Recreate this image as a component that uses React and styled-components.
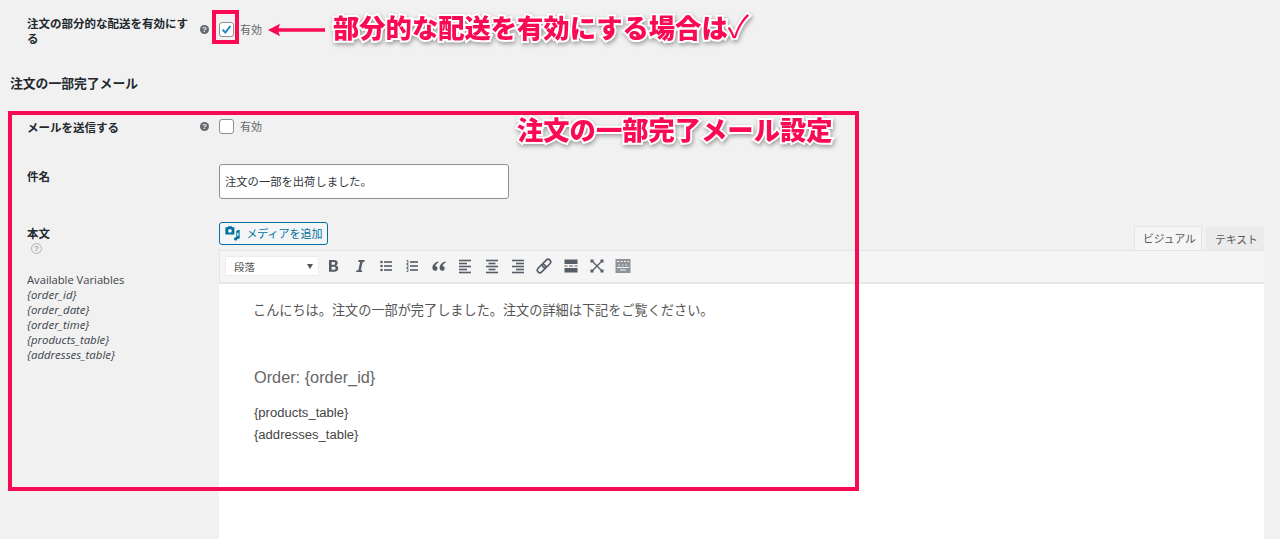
import React from "react";
import styled, { createGlobalStyle } from "styled-components";

const Global = createGlobalStyle`
  html, body { margin: 0; padding: 0; background: #f1f1f1; }
  body { font-family: "Noto Sans CJK JP", "Noto Sans", sans-serif; color: #23282d; }
`;
const Page = styled.div`
  position: relative; width: 1280px; height: 539px; overflow: hidden;
  background: #f1f1f1; box-sizing: border-box; padding: 16px 16px 0 10px;
`;
const Row = styled.div`
  display: grid; grid-template-columns: ${p => p.$cols || "173px 19px 1fr"}; padding-left: 17px;
  margin-top: ${p => p.$top || 0}px; align-items: start;
`;
const Label = styled.div`
  font-size: 11.5px; line-height: 14.5px; font-weight: 700; color: #23282d;
  padding-right: 5px; margin-top: ${p => p.$top || 0}px;
`;
const Heading = styled.h2`
  margin: 29px 0 0; font-size: 12.8px; line-height: 18px; font-weight: 700; color: #23282d;
`;
const HelpDot = styled.span`
  display: block; width: 9px; height: 9px; border-radius: 50%; background: #646970; color: #f1f1f1;
  font: 700 8px/9px "Liberation Sans", sans-serif; text-align: center; margin-top: ${p => p.$top || 0}px;
`;
const HelpRing = styled.span`
  display: block; width: 9px; height: 9px; border-radius: 50%; border: 1.5px solid #b0b4b8; color: #a0a5aa;
  font: 700 8px/9px "Liberation Sans", sans-serif; text-align: center; margin: 3px 0 0 4px;
`;
const Check = styled.label`
  display: flex; align-items: center; gap: 6px; font-size: 11px; line-height: 16px; color: #646970;
  margin-top: ${p => p.$top || 0}px;
`;
const Box = styled.span`
  display: flex; align-items: center; justify-content: center; width: 13px; height: 13px;
  border: 1px solid #8c8f94; border-radius: 3px; background: #fff;
`;
const TextInput = styled.div`
  width: 288px; height: 32px; padding-bottom: 1px; background: #fff;
  border: 1px solid #8c8f94; border-radius: 3px; display: flex; align-items: center;
  font-size: 11.3px; color: #32373c; text-indent: 5px;
`;
const SideNote = styled.div`
  font-family: "Open Sans", "Noto Sans", sans-serif; font-size: 11.2px; line-height: 15px; color: #3c434a; margin-top: 18px;
  font-weight: 500;
`;
const Var = styled.div`
  font-style: italic; font-size: 11.4px;
`;
const Editor = styled.div`
  display: flex; flex-direction: column; min-width: 0;
`;
const EditorHead = styled.div`
  display: flex; justify-content: space-between; align-items: flex-end; height: 27px;
`;
const MediaButton = styled.div`
  display: flex; align-items: center; justify-content: center; gap: 5px; width: 107px; height: 21px; margin-bottom: 5px;
  border: 1px solid #0071a1; border-radius: 3px; background: #f3f5f6; color: #0071a1;
  font-size: 11px; line-height: 21px;
`;
const Tabs = styled.div`
  display: flex; gap: 4px; align-items: flex-end;
`;
const Tab = styled.div`
  height: ${p => p.$on ? 24 : 23}px; box-sizing: border-box; padding: 0 8px; font-size: 10.8px; line-height: 23px;
  color: #555; background: ${p => p.$on ? "#f5f5f5" : "#ebebeb"}; border: 1px solid ${p => p.$on ? "#e2e4e7" : "#ebebeb"};
  border-bottom: none; width: ${p => p.$w}px; text-align: center; white-space: nowrap;
`;
const Toolbar = styled.div`
  display: flex; align-items: center; height: 34px; padding-left: 5px; box-sizing: border-box;
  background: #f5f5f5; border: 1px solid #e2e4e7; border-right: none; border-bottom: 2px solid #e6e6e6;
`;
const Select = styled.div`
  display: flex; align-items: center; justify-content: space-between; box-sizing: border-box;
  width: 94px; height: 20px; background: #fff; border: 1px solid #ececec; padding: 0 5px 0 8px; font-size: 10.5px; color: #555;
  margin-right: 1px;
`;
const Caret = styled.span`
  width: 0; height: 0; border-left: 3.5px solid transparent; border-right: 3.5px solid transparent; border-top: 5px solid #555;
`;
const ToolIcon = styled.span`
  display: flex; width: 26.4px; justify-content: center; align-items: center; flex: none;
`;
const Body = styled.div`
  background: #fff; height: 260px; padding: 16px 35px; color: #555; font-size: 13.17px; line-height: 19px;
`;
const Para = styled.p`
  margin: 0 0 0 -1px;
`;
const OrderTitle = styled.h3`
  margin: 46px 0 0; font: 400 16.3px/24px "Liberation Sans", sans-serif; color: #666;
`;
const Vars = styled.div`
  margin-top: 13px; font: 400 13.05px/22px "Liberation Sans", sans-serif; color: #444;
`;
const Frame = styled.div`
  position: absolute; left: ${p => p.$l}px; top: ${p => p.$t}px; width: ${p => p.$w}px; height: ${p => p.$h}px;
  box-sizing: border-box; border: ${p => p.$b}px solid #fb0a54;
`;
const Callout = styled.div`
  position: absolute; left: ${p => p.$l}px; top: ${p => p.$t}px; white-space: nowrap;
  font-family: "Noto Sans CJK JP", sans-serif; font-size: 26.3px; line-height: 36px; font-weight: 900; color: #fb0a54;
  -webkit-text-stroke: 4px #fff; paint-order: stroke fill;
  filter: drop-shadow(1px 2px 2px rgba(0,0,0,.35));
`;
const CheckGlyph = styled.span`
  font-size: 31px; font-weight: 400;
`;
const Arrow = styled.svg`
  position: absolute; left: 267px; top: 23px;
`;

const S = ({ children, w = 18, h = 18 }) => <svg width={w} height={h} viewBox="0 0 18 18" fill="none">{children}</svg>;
const c = "#555d66";
const lines = (arr, sw = 1.6) => arr.map(([a, b, y], i) => <path key={i} d={`M${a} ${y}H${b}`} stroke={c} strokeWidth={sw} />);

const icons = [
  <S key="b"><path fill={c} d="M5 3h5.2c2.3 0 3.5 1.1 3.5 2.9 0 1.2-.6 2-1.6 2.5 1.3.4 2.1 1.4 2.1 2.8 0 2.2-1.5 3.6-4 3.6H5zm2.6 2.1v2.6h2c1 0 1.5-.5 1.5-1.3 0-.8-.5-1.3-1.5-1.3zm0 4.6v3.1h2.3c1.1 0 1.7-.6 1.7-1.6 0-.9-.6-1.5-1.7-1.5z" /></S>,
  <S key="i"><path fill={c} d="M7.6 3h6.2l-.4 1.8-1.8.4-1.8 8 1.6.4-.4 1.4H5l.4-1.4 1.9-.4 1.8-8-1.8-.4z" /></S>,
  <S key="ul">{[5, 9, 13].map(y => <circle key={y} cx="4.5" cy={y} r="1.3" fill={c} />)}{lines([[7, 15, 5], [7, 15, 9], [7, 15, 13]])}</S>,
  <S key="ol">{[5, 9, 13].map(y => <path key={y} d={`M3.5 ${y - 1.5}h1.4v3H3.5`} stroke={c} strokeWidth=".9" />)}{lines([[7, 15, 5], [7, 15, 9], [7, 15, 13]])}</S>,
  <S key="q"><path fill={c} d="M8.4 4.4C5 5.2 2.4 7.5 2.4 10.800c0 1.900 1.100 3 2.600 3 1.400 0 2.500-1 2.500-2.400S6.500 9 5.400 9c.2-1.500 1.500-2.700 3-3.300zM15.600 4.400c-3.400.8-6 3.100-6 6.400 0 1.900 1.100 3 2.600 3 1.400 0 2.500-1 2.500-2.400S13.700 9 12.600 9c.2-1.500 1.500-2.700 3-3.300z" /></S>,
  <S key="l">{lines([[3, 15, 3.5], [3, 11, 6.5], [3, 15, 9.5], [3, 11, 12.5], [3, 15, 15.5]])}</S>,
  <S key="ce">{lines([[3, 15, 3.5], [5.5, 12.5, 6.5], [3, 15, 9.5], [5.5, 12.5, 12.5], [3, 15, 15.5]])}</S>,
  <S key="r">{lines([[3, 15, 3.5], [7, 15, 6.5], [3, 15, 9.5], [7, 15, 12.5], [3, 15, 15.5]])}</S>,
  <S key="link"><g stroke={c} strokeWidth="1.6" fill="none" transform="rotate(-45 9 9)"><rect x="0.6" y="6.4" width="9.6" height="5.2" rx="2.6" /><rect x="7.8" y="6.4" width="9.6" height="5.2" rx="2.6" /></g></S>,
  <S key="more"><rect x="2.5" y="2.5" width="13" height="4.5" fill={c} /><rect x="2.5" y="11" width="13" height="4.5" fill={c} /><path d="M2.5 9h3M7 9h4M12.5 9h3" stroke={c} strokeWidth="1.2" /></S>,
  <S key="fs"><g stroke={c} strokeWidth="1.3"><path d="M5 5l8 8M13 5l-8 8" /></g><g fill={c}>{[[2.5, 2.5], [12.5, 2.5], [2.5, 12.5], [12.5, 12.5]].map(([x, y]) => <rect key={x + "" + y} x={x} y={y} width="3" height="3" />)}</g></S>,
  <S key="k"><rect x="1.5" y="2" width="15" height="14" fill="#8f9499" /><g stroke="#f5f5f5" strokeWidth="1"><path d="M3 4.5h2M6.5 4.5h2M10 4.5h2M13.5 4.5h1.5M3 10.500h12M4.500 8h1.500M8 8h1.500M11.500 8h1.500M6 13h6" /></g></S>,
];

export default function App() {
  return (
    <Page>
      <Global />
      <Row>
        <Label>注文の部分的な配送を有効にする</Label>
        <HelpDot $top={9}>?</HelpDot>
        <Check $top={5}>
          <Box><svg width="13" height="13" viewBox="0 0 13 13"><path d="M2.6 6.8 5.4 9.6 10.4 3" stroke="#1e8cbe" strokeWidth="2" fill="none" /></svg></Box>
          有効
        </Check>
      </Row>
      <Heading>注文の一部完了メール</Heading>
      <Row $top={26}>
        <Label $top={2}>メールを送信する</Label>
        <HelpDot $top={4}>?</HelpDot>
        <Check><Box />有効</Check>
      </Row>
      <Row $top={29}>
        <Label $top={5}>件名</Label>
        <span />
        <TextInput>注文の一部を出荷しました。</TextInput>
      </Row>
      <Row $top={24} $cols="192px 1fr">
        <div>
          <Label $top={3}>本文</Label>
          <HelpRing>?</HelpRing>
          <SideNote>
            Available Variables
            <Var>{"{order_id}"}</Var>
            <Var>{"{order_date}"}</Var>
            <Var>{"{order_time}"}</Var>
            <Var>{"{products_table}"}</Var>
            <Var>{"{addresses_table}"}</Var>
          </SideNote>
        </div>
        <Editor>
          <EditorHead>
            <MediaButton>
              <svg width="17" height="17" viewBox="0 0 18 18"><path fill="#0071a1" d="M1.5 2.5h2l1-1.2h3.5l1 1.2h2v7.500h-9.500zM6.300 4.200a2 2 0 1 0 0 4 2 2 0 0 0 0-4zM13 6l3.600-1v8.200a1.700 1.700 0 1 1-1.200-1.600V8l-1.400.4v6.300a1.700 1.700 0 1 1-1-1.500z" /></svg>
              メディアを追加
            </MediaButton>
            <Tabs>
              <Tab $on $w={68}>ビジュアル</Tab>
              <Tab $w={58}>テキスト</Tab>
            </Tabs>
          </EditorHead>
          <Toolbar>
            <Select>段落<Caret /></Select>
            {icons.map(icon => <ToolIcon key={icon.key}>{icon}</ToolIcon>)}
          </Toolbar>
          <Body>
            <Para>こんにちは。注文の一部が完了しました。注文の詳細は下記をご覧ください。</Para>
            <OrderTitle>Order: {"{order_id}"}</OrderTitle>
            <Vars>{"{products_table}"}<br />{"{addresses_table}"}</Vars>
          </Body>
        </Editor>
      </Row>

      <Frame $l={212} $t={10} $w={27} $h={34} $b={4} />
      <Frame $l={8} $t={111} $w={851} $h={380} $b={4} />
      <Arrow width="60" height="14" viewBox="0 0 60 14"><path d="M1 7 13 .8 11.5 5.2H58V8.8H11.5L13 13.200z" fill="#fb0a54" /></Arrow>
      <Callout $l={333} $t={7}>部分的な配送を有効にする場合は<CheckGlyph>✓</CheckGlyph></Callout>
      <Callout $l={517} $t={111}>注文の一部完了メール設定</Callout>
    </Page>
  );
}
